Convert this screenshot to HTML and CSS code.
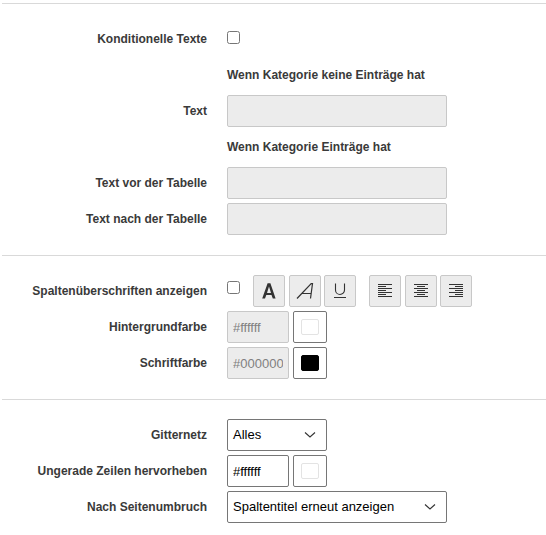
FILE: index.html
```html
<!DOCTYPE html>
<html lang="de">
<head>
<meta charset="utf-8">
<title>Tabelle</title>
<link rel="stylesheet" href="styles.css">
</head>
<body>
<form>
  <section class="group">
    <div class="row"><label class="label">Konditionelle Texte</label><input type="checkbox" class="check"></div>
    <div class="row"><span class="label"></span><strong class="heading">Wenn Kategorie keine Einträge hat</strong></div>
    <div class="row"><label class="label">Text</label><input class="field wide" disabled></div>
    <div class="row"><span class="label"></span><strong class="heading">Wenn Kategorie Einträge hat</strong></div>
    <div class="row"><label class="label">Text vor der Tabelle</label><input class="field wide" disabled></div>
    <div class="row"><label class="label">Text nach der Tabelle</label><input class="field wide" disabled></div>
  </section>
  <section class="group">
    <div class="row"><label class="label">Spaltenüberschriften anzeigen</label><input type="checkbox" class="check raised">
      <div class="tools">
        <button type="button" class="tool" disabled><svg viewBox="0 0 32 32"><path d="M9.2 23.6L14.6 8.2h2.8L22.6 23.6h-2.8l-1.3-3.5h-5.2l-1.3 3.5zM14 18h4L16 11.6z" fill="#333" fill-rule="evenodd"/></svg></button>
        <button type="button" class="tool" disabled><svg viewBox="0 0 32 32"><path d="M8 23.5L22.2 8.6h1.3L21.5 23.5M13.3 18.5h8.8" fill="none" stroke="#333" stroke-width="1.2"/></svg></button>
        <button type="button" class="tool tight" disabled><svg viewBox="0 0 32 32"><path d="M11.5 8.5v6.5a4.5 4.5 0 0 0 9 0V8.5M10 22.5h12" fill="none" stroke="#333" stroke-width="1.1"/></svg></button>
      </div>
      <div class="tools align">
        <button type="button" class="tool" disabled><svg viewBox="0 0 32 32"><path d="M9 9.5h14M9 11.5h8M9 13.5h14M9 15.5h8M9 17.5h14M9 19.5h8M9 21.5h14" stroke="#333"/></svg></button>
        <button type="button" class="tool" disabled><svg viewBox="0 0 32 32"><path d="M9 9.5h14M12 11.5h8M9 13.5h14M12 15.5h8M9 17.5h14M12 19.5h8M9 21.5h14" stroke="#333"/></svg></button>
        <button type="button" class="tool tight" disabled><svg viewBox="0 0 32 32"><path d="M9 9.5h14M15 11.5h8M9 13.5h14M15 15.5h8M9 17.5h14M15 19.5h8M9 21.5h14" stroke="#333"/></svg></button>
      </div>
    </div>
    <div class="row"><label class="label">Hintergrundfarbe</label><input class="field color" value="#ffffff" disabled><span class="picker"><span class="swatch"></span></span></div>
    <div class="row"><label class="label">Schriftfarbe</label><input class="field color" value="#000000" disabled><span class="picker"><span class="swatch black"></span></span></div>
  </section>
  <section class="group">
    <div class="row"><label class="label">Gitternetz</label><div class="field select medium"><span class="value">Alles</span><svg class="chevron" viewBox="0 0 12 8"><path d="M1 1.5l5 4.5l5-4.5" fill="none" stroke="#333" stroke-width="1.1"/></svg></div></div>
    <div class="row"><label class="label">Ungerade Zeilen hervorheben</label><input class="field color" value="#ffffff"><span class="picker"><span class="swatch"></span></span></div>
    <div class="row"><label class="label">Nach Seitenumbruch</label><div class="field select wide"><span class="value">Spaltentitel erneut anzeigen</span><svg class="chevron" viewBox="0 0 12 8"><path d="M1 1.5l5 4.5l5-4.5" fill="none" stroke="#333" stroke-width="1.1"/></svg></div></div>
  </section>
</form>
</body>
</html>
```
FILE: styles.css
```css
* { box-sizing: border-box; }
body {
  margin: 0;
  padding: 3px 0 0 2px;
  background: #fff;
  color: #3a3a3a;
  font: 12px "Liberation Sans", Arial, sans-serif;
  overflow: hidden;
}
.group {
  border-top: 1px solid #d9d9d9;
  padding: 17px 0 18px;
}
.row {
  display: flex;
  align-items: center;
  height: 36px;
}
.label {
  width: 205px;
  margin-right: 20px;
  text-align: right;
  font-weight: bold;
  white-space: nowrap;
}
.check {
  width: 13px;
  height: 13px;
  margin: 0 13px 3px 0;
}
.raised { margin-bottom: 7px; }
.field {
  height: 32px;
  padding: 0 5px;
  border: 1px solid #767676;
  border-radius: 2px;
  background: #fff;
  color: #000;
  font: 13px "Liberation Sans", Arial, sans-serif;
}
.field:disabled {
  border-color: #c8c8c8;
  background: #ececec;
  color: #808080;
}
.wide { width: 220px; }
.medium { width: 100px; }
.color { width: 62px; margin-right: 4px; }
.select {
  display: flex;
  align-items: center;
  justify-content: space-between;
  padding-right: 10px;
}
.value { padding-bottom: 2px; }
.chevron { width: 12px; height: 8px; }
.picker {
  display: flex;
  align-items: center;
  justify-content: center;
  width: 34px;
  height: 32px;
  border: 1px solid #767676;
  border-radius: 2px;
}
.swatch {
  width: 18px;
  height: 16px;
  border: 1px solid #e3e3e3;
  border-radius: 2px;
  background: #fff;
}
.black { border-color: #000; background: #000; }
.tools { display: flex; gap: 4px; }
.align { margin-left: 13px; }
.tool {
  display: flex;
  align-items: center;
  justify-content: center;
  width: 32px;
  height: 32px;
  padding: 0;
  border: 1px solid #c8c8c8;
  border-radius: 2px;
  background: #ececec;
}
.tool svg { flex: none; width: 32px; height: 32px; margin: -1px; }
.tight { margin-left: -1px; }
```
